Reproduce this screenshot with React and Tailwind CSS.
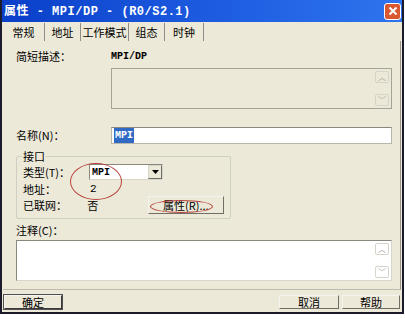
import { useState } from "react";

const cjk = { fontFamily: '"Noto Sans CJK SC", "Liberation Sans", sans-serif' };
const mono = { fontFamily: '"Liberation Mono", "DejaVu Sans Mono", monospace' };

function ScrollArrows() {
    return (
        <div className="flex w-[14px] flex-col justify-between py-[2px]">
            <div className="flex h-[12px] items-center justify-center rounded-[2px] border border-[#d6d3c8] text-[8px] leading-none text-[#a8a69c]">
                ︿
            </div>
            <div className="flex h-[12px] items-center justify-center rounded-[2px] border border-[#d6d3c8] text-[8px] leading-none text-[#a8a69c]">
                ﹀
            </div>
        </div>
    );
}

export default function App() {
    const [tab, setTab] = useState(0);
    const tabs = ["常规", "地址", "工作模式", "组态", "时钟"];
    const tabWidths = ["w-[42px]", "w-[36px]", "w-[48px]", "w-[36px]", "w-[39px]"];

    return (
        <div className="relative h-[319px] w-[405px] overflow-hidden bg-white text-[11px] text-black" style={cjk}>
            {/* Window */}
            <div className="flex h-[314px] w-[404px] flex-col border-r-2 border-b-2 border-l-[2px] border-[#1a1a2a] bg-[#ece9d8]">
                {/* Title bar */}
                <div className="flex h-[22px] shrink-0 items-center justify-between bg-gradient-to-r from-[#0a3fc8] via-[#1c5ae0] to-[#2f74ee] pl-[2px] pr-[1px]">
                    <span className="text-[12px] font-bold tracking-[0.5px] text-white" style={mono}>
                        <span style={cjk}>属性</span> - MPI/DP - (R0/S2.1)
                    </span>
                    <div className="flex h-[17px] w-[17px] items-center justify-center rounded-[3px] border border-white bg-[#d9582f]">
                        <svg width="10" height="10" viewBox="0 0 10 10">
                            <path d="M1.5 1.5 L8.5 8.5 M8.5 1.5 L1.5 8.5" stroke="white" strokeWidth="2" />
                        </svg>
                    </div>
                </div>

                {/* Tabs */}
                <div className="flex h-[19px] shrink-0 items-end pl-[1px] pt-[1px]">
                    {tabs.map((t, i) => (
                        <button
                            key={t}
                            onClick={() => setTab(i)}
                            className={`flex h-[18px] ${tabWidths[i]} items-center justify-center whitespace-nowrap border-r border-[#8f8d85] text-[11px] ${
                                tab === i ? "bg-[#ece9d8]" : "bg-[#ece9d8]"
                            }`}
                        >
                            {t}
                        </button>
                    ))}
                </div>

                {/* Panel */}
                <div className="mx-[1px] flex h-[249px] shrink-0 flex-col border-r border-r-[#9a988e] border-b border-b-[#bdbab0] pl-[13px] pr-[8px] pt-[8px]">
                    <div className="flex h-[14px] items-center">
                        <span className="w-[95px]">简短描述：</span>
                        <span className="text-[10px] font-bold" style={mono}>MPI/DP</span>
                    </div>
                    <div className="ml-[95px] mt-[5px] flex h-[41px] border border-[#a5a396] bg-[#ece9d8] pr-[2px]">
                        <div className="flex-1" />
                        <ScrollArrows />
                    </div>

                    <div className="mt-[18px] flex h-[17px] items-center">
                        <span className="w-[95px]">名称(N)：</span>
                        <div className="flex h-[17px] flex-1 items-center border border-[#b8b6aa] border-t-[#8a887e] bg-white pl-[2px]">
                            <span className="bg-[#316ac5] px-[1px] text-[10px] font-bold text-white" style={mono}>
                                MPI
                            </span>
                        </div>
                    </div>

                    {/* Interface group */}
                    <div className="relative mt-[12px] h-[63px] w-[215px] rounded-[2px] border border-[#d0cfc3] px-[6px] pt-[7px]">
                        <span className="absolute -top-[9px] left-[5px] bg-[#ece9d8] px-[1px]">接口</span>
                        <div className="flex h-[16px] items-center">
                            <span className="w-[66px]">类型(T)：</span>
                            <div className="flex h-[16px] w-[74px] items-center justify-between border border-[#8a887e] border-b-[#d8d6cc] border-r-[#d8d6cc] bg-white pl-[2px]">
                                <span className="text-[10px] font-bold" style={mono}>MPI</span>
                                <div className="flex h-[14px] w-[14px] items-center justify-center border border-[#d8d6cc] border-b-[#6f6d64] border-r-[#6f6d64] bg-[#ece9d8]">
                                    <svg width="7" height="4" viewBox="0 0 7 4">
                                        <path d="M0 0 L7 0 L3.5 4 Z" fill="black" />
                                    </svg>
                                </div>
                            </div>
                        </div>
                        <div className="mt-[2px] flex h-[15px] items-center">
                            <span className="w-[67px]">地址：</span>
                            <span className="text-[11px]" style={mono}>2</span>
                        </div>
                        <div className="flex h-[16px] items-center">
                            <span className="w-[65px]">已联网：</span>
                            <span className="w-[61px]">否</span>
                            <div className="flex h-[18px] w-[77px] items-center justify-center whitespace-nowrap border border-[#f4f3ee] border-b-[#6f6d64] border-r-[#6f6d64]">
                                属性(R)...
                            </div>
                        </div>
                    </div>

                    <div className="mt-[4px] flex h-[14px] items-center">注释(C)：</div>
                    <div className="mt-[3px] flex h-[41px] border border-[#8a887e] border-b-[#d8d6cc] border-r-[#d8d6cc] bg-white pr-[2px]">
                        <div className="flex-1" />
                        <ScrollArrows />
                    </div>
                </div>

                {/* Bottom buttons */}
                <div className="flex flex-1 items-center justify-between px-[2px] pt-[2px]">
                    <div className="flex h-[14px] w-[58px] items-center justify-center border border-[#f4f3ee] border-b-[#3a3a3a] border-r-[#3a3a3a] outline outline-1 outline-[#505050]">
                        确定
                    </div>
                    <div className="flex gap-[3px]">
                        <div className="flex h-[14px] w-[60px] items-center justify-center border border-[#f4f3ee] border-b-[#6f6d64] border-r-[#6f6d64]">
                            取消
                        </div>
                        <div className="flex h-[14px] w-[58px] items-center justify-center border border-[#f4f3ee] border-b-[#6f6d64] border-r-[#6f6d64]">
                            帮助
                        </div>
                    </div>
                </div>
            </div>

            {/* Red annotation ellipses */}
            <div className="pointer-events-none absolute left-[70px] top-[163px] h-[37px] w-[52px] rounded-[50%] border-[1.5px] border-[#b8423a]" />
            <div className="pointer-events-none absolute left-[150px] top-[200px] h-[13px] w-[63px] rounded-[50%] border-[1.5px] border-[#b8423a]" />
        </div>
    );
}
